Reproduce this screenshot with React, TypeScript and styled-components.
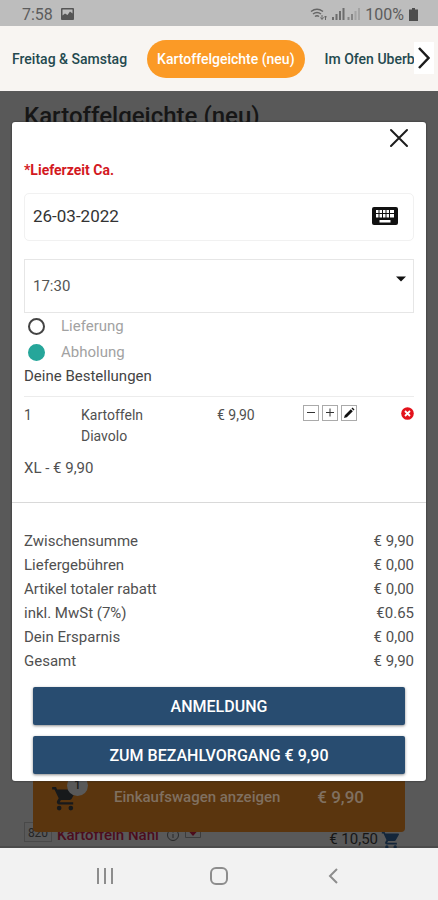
import React, { useState } from "react";
import styled, { createGlobalStyle } from "styled-components";

const GlobalStyle = createGlobalStyle`
  * { box-sizing: border-box; }
  body { margin: 0; background: #595959; }
  body, button, input, select { font-family: Roboto, "Liberation Sans", sans-serif; }
`;

const Screen = styled.div`
  display: flex;
  flex-direction: column;
  min-height: 100vh;
  color: #505050;
  font-size: 15px;
  overflow: hidden;
`;

const StatusBar = styled.div`
  display: flex;
  align-items: center;
  gap: 8px;
  height: 26px;
  padding: 2px 20px 0 22px;
  background: #bdbdbd;
  color: #5c5c5c;
  font-size: 16px;
`;

const StatusIcons = styled.div`
  display: flex;
  align-items: center;
  gap: 5px;
  margin-left: auto;
`;

const CategoryBar = styled.nav`
  position: relative;
  display: flex;
  align-items: center;
  height: 65px;
  padding-left: 12px;
  gap: 20px;
  background: #f8f5f2;
  overflow: hidden;
  white-space: nowrap;
`;

const Category = styled.a<{ $active?: boolean }>`
  flex: none;
  padding: ${(p) => (p.$active ? "0 10px" : "0")};
  border-radius: 19px;
  background: ${(p) => (p.$active ? "#fb9a26" : "transparent")};
  color: ${(p) => (p.$active ? "#fff" : "#24494f")};
  font-size: 14px;
  font-weight: 500;
  line-height: 38px;
  text-decoration: none;
`;

const NextButton = styled.button`
  position: absolute;
  top: 16px;
  right: 4px;
  display: flex;
  align-items: center;
  justify-content: center;
  width: 20px;
  height: 32px;
  padding: 0;
  border: 0;
  background: #fff;
`;

const Stage = styled.main`
  display: grid;
  flex: 1;
  overflow: hidden;
  background: #595959;
`;

const MenuPage = styled.div`
  position: relative;
  grid-area: 1 / 1;
  display: flex;
  flex-direction: column;
  justify-content: space-between;
  padding: 9px 24px 0;
  border-bottom: 2px solid #4b4b4b;
`;

const MenuTitle = styled.h1`
  margin: 0;
  color: #161616;
  font-size: 24px;
  font-weight: 500;
  line-height: 32px;
`;

const MenuRow = styled.div`
  display: flex;
  align-items: flex-end;
  height: 24px;
  padding-right: 13px;
  color: #161616;
  font-size: 15px;
  line-height: 18px;
`;

const MenuNumber = styled.span`
  width: 28px;
  height: 20px;
  margin: 0 5px 4px 0;
  border: 1px solid #494949;
  color: #252525;
  font-size: 12px;
  line-height: 20px;
  text-align: center;
`;

const MenuName = styled.span`
  height: 20px;
  margin-right: 8px;
  color: #4c0c1c;
  font-weight: 500;
`;

const MenuIcon = styled.span`
  display: flex;
  height: 20px;
  margin-right: 6px;
`;

const MenuPrice = styled.span`
  display: flex;
  align-items: center;
  gap: 3px;
  height: 14px;
  margin-left: auto;
`;

const CartBar = styled.div`
  position: absolute;
  right: 33px;
  bottom: 14px;
  left: 33px;
  display: flex;
  align-items: center;
  height: 70px;
  padding: 0 41px 0 18px;
  border-radius: 4px;
  background: #5a350e;
  color: #807060;
  font-size: 15px;
  font-weight: 500;
`;

const CartLabel = styled.span`
  margin: 0 auto 0 35px;
`;

const CartTotal = styled.span`
  font-size: 17px;
`;

const CartCount = styled.span`
  position: absolute;
  top: 13px;
  left: 34px;
  width: 21px;
  height: 21px;
  border-radius: 50%;
  background: #595959;
  color: #1c1c1c;
  font-size: 12px;
  line-height: 21px;
  text-align: center;
`;

const Dialog = styled.form`
  position: relative;
  z-index: 1;
  grid-area: 1 / 1;
  align-self: start;
  margin: 31px 12px 67px;
  padding: 38px 0 7px;
  border-radius: 3px;
  background: #fff;
  box-shadow: 0 0 2px #222;
`;

const CloseButton = styled.button`
  position: absolute;
  top: 5px;
  right: 16px;
  display: flex;
  padding: 0;
  border: 0;
  background: none;
`;

const DialogBody = styled.div`
  display: flex;
  flex-direction: column;
  padding: 0 12px;
`;

const DateLabel = styled.label`
  color: #d3191f;
  font-size: 14px;
  font-weight: 700;
  line-height: 21px;
`;

const DateField = styled.div`
  display: flex;
  align-items: center;
  height: 48px;
  margin: 12px 0 18px;
  padding: 0 15px 2px 8px;
  border: 1px solid #f1f1f1;
  border-radius: 5px;
`;

const DateInput = styled.input`
  flex: 1;
  min-width: 0;
  padding: 0;
  border: 0;
  outline: 0;
  background: none;
  color: #333;
  font-size: 17px;
`;

const TimeField = styled.div`
  position: relative;
  display: flex;
  height: 54px;
`;

const TimeSelect = styled.select`
  flex: 1;
  padding: 0 8px;
  border: 1px solid #e6e6e6;
  border-radius: 0;
  appearance: none;
  background: none;
  color: #555;
  font-size: 15px;
`;

const Caret = styled.svg`
  position: absolute;
  top: 17px;
  right: 8px;
  pointer-events: none;
`;

const Methods = styled.fieldset`
  margin: 0;
  padding: 0 0 0 4px;
  border: 0;
`;

const Method = styled.label`
  display: flex;
  align-items: center;
  gap: 16px;
  height: 26px;
  color: #a2a2a2;
  font-size: 15px;
`;

const Radio = styled.input`
  width: 17px;
  height: 17px;
  margin: 0;
  border: 2px solid #444;
  border-radius: 50%;
  appearance: none;
  background: #fff;

  &:checked {
    border-color: #26a69a;
    background: #26a69a;
  }
`;

const OrdersTitle = styled.h2`
  margin: 0;
  padding: 1px 0 9px;
  border-bottom: 1px solid #ececec;
  color: #444;
  font-size: 15px;
  font-weight: 400;
  line-height: 21px;
`;

const OrderTable = styled.table`
  width: 100%;
  margin-top: 8px;
  border-collapse: collapse;
  table-layout: fixed;
`;

const OrderCell = styled.td<{ $width?: string; $right?: boolean }>`
  width: ${(p) => p.$width ?? "auto"};
  padding: 0;
  font-size: 14px;
  line-height: 21px;
  text-align: ${(p) => (p.$right ? "right" : "left")};
  vertical-align: top;
`;

const VariantCell = styled.td`
  padding: 11px 0 23px;
  font-size: 15px;
  line-height: 21px;
`;

const Tools = styled.div`
  display: flex;
  gap: 3px;
`;

const ToolButton = styled.button`
  display: flex;
  align-items: center;
  justify-content: center;
  width: 16px;
  height: 16px;
  padding: 0;
  border: 1px solid #aaa;
  background: #fff;
`;

const RemoveButton = styled.button`
  padding: 0;
  border: 0;
  background: none;
  line-height: 0;
`;

const Totals = styled.section`
  padding: 26px 12px 0;
  border-top: 1px solid #d9d9d9;
`;

const TotalsTable = styled.table`
  width: 100%;
  border-collapse: collapse;
`;

const TotalName = styled.th`
  padding: 0;
  font-size: 15px;
  font-weight: 400;
  line-height: 24px;
  text-align: left;
`;

const TotalValue = styled.td`
  padding: 0;
  font-size: 15px;
  line-height: 24px;
  text-align: right;
`;

const Actions = styled.div`
  display: flex;
  flex-direction: column;
  gap: 11px;
  padding: 14px 21px 0;
`;

const ActionButton = styled.button`
  height: 38px;
  border: 0;
  border-radius: 2px;
  background: #284c70;
  box-shadow: 0 1px 3px #8b8b8b;
  color: #fff;
  font-size: 16px;
  font-weight: 500;
`;

const SystemNav = styled.footer`
  display: flex;
  align-items: center;
  height: 52px;
  padding: 4px 48px 0;
  background: #f2f2f2;
`;

const NavButton = styled.button`
  display: flex;
  flex: 1;
  justify-content: center;
  padding: 0;
  border: 0;
  background: none;
`;

const categories = ["Freitag & Samstag", "Kartoffelgeichte (neu)", "Im Ofen Uberb"];

const totals = [
  ["Zwischensumme", "€ 9,90"],
  ["Liefergebühren", "€ 0,00"],
  ["Artikel totaler rabatt", "€ 0,00"],
  ["inkl. MwSt (7%)", "€0.65"],
  ["Dein Ersparnis", "€ 0,00"],
  ["Gesamt", "€ 9,90"],
];

function CartIcon({ size, color }: { size: number; color: string }) {
  return (
    <svg width={size} height={size} viewBox="0 0 24 24" fill={color} aria-hidden="true">
      <path d="M7 19.500a2 2 0 1 0 0 4 2 2 0 0 0 0-4zM17 19.500a2 2 0 1 0 0 4 2 2 0 0 0 0-4zM1 3.500v2h2l3.600 7.600-1.400 2.400C4.500 16.900 5.500 18.500 7 18.500h12v-2H7.400l1.100-2h7.500c.700 0 1.400-.400 1.700-1L21.700 6.200 21 5.500H5.200L4.300 3.500z" />
    </svg>
  );
}

function Status() {
  return (
    <StatusBar>
      <span>7:58</span>
      <svg width="13" height="12" viewBox="0 0 13 12" aria-hidden="true">
        <rect width="13" height="12" rx="1" fill="#555" />
        <path d="M1.500 1.500h10v4L9 3.500 6.500 7 4 5.500l-2.500 2z" fill="#bdbdbd" />
      </svg>
      <StatusIcons>
        <svg width="17" height="15" viewBox="0 0 17 15" fill="none" stroke="#666" strokeWidth="1.500" aria-hidden="true">
          <path d="M1 4.500Q7 0 13 4.500M3 7q4-3 8 0M5 9.500q2-1.500 4 0" />
          <path d="M12 8v4M10.500 10.500 12 12.500l1.500-2M15.500 13V9M14 10.500 15.500 9l1.500 1.500" strokeWidth="1" />
        </svg>
        <svg width="28" height="12" viewBox="0 0 28 12" aria-hidden="true">
          <path d="M0 9h2v3H0zM3.500 6h2v6h-2zM7 3h2v9H7zM10.500 0h2v12h-2z" fill="#6d6d6d" />
          <path d="M15.500 9h2v3h-2zM19 6h2v6h-2z" fill="#858585" />
          <path d="M22.500 3h2v9h-2zM26 0h2v12h-2z" fill="#a4a4a4" />
        </svg>
        <span>100%</span>
        <svg width="9" height="13" viewBox="0 0 9 13" aria-hidden="true">
          <path d="M3 0h3v1.500h3V13H0V1.500h3z" fill="#4d4d4d" />
        </svg>
      </StatusIcons>
    </StatusBar>
  );
}

export default function App() {
  const [method, setMethod] = useState("Abholung");
  return (
    <>
      <GlobalStyle />
      <Screen>
        <Status />
        <CategoryBar>
          {categories.map((name, i) => (
            <Category key={name} href="#" $active={i === 1}>
              {name}
            </Category>
          ))}
          <NextButton type="button" aria-label="Weiter">
            <svg width="12" height="22" viewBox="0 0 12 22" fill="none" stroke="#1c1c1c" strokeWidth="2.500" aria-hidden="true">
              <path d="M1 1l9.500 10L1 21" />
            </svg>
          </NextButton>
        </CategoryBar>
        <Stage>
          <MenuPage>
            <MenuTitle>Kartoffelgeichte (neu)</MenuTitle>
            <MenuRow>
              <MenuNumber>820</MenuNumber>
              <MenuName>Kartoffeln Nahl</MenuName>
              <MenuIcon>
                <svg width="12" height="16" viewBox="0 0 12 16" fill="none" stroke="#292929" aria-hidden="true">
                  <circle cx="6" cy="9" r="5.500" />
                  <path d="M6 8v4M6 5.500v1" />
                </svg>
              </MenuIcon>
              <MenuIcon>
                <svg width="16" height="14" viewBox="0 0 16 14" aria-hidden="true">
                  <path d="M.5 0v11.500h15V0" fill="none" stroke="#3c3c3c" />
                  <path d="M3.500 5h9L8 10z" fill="#4c0c1c" />
                </svg>
              </MenuIcon>
              <MenuPrice>
                € 10,50
                <CartIcon size={20} color="#14263a" />
              </MenuPrice>
            </MenuRow>
            <CartBar>
              <CartIcon size={28} color="#17191b" />
              <CartCount>1</CartCount>
              <CartLabel>Einkaufswagen anzeigen</CartLabel>
              <CartTotal>€ 9,90</CartTotal>
            </CartBar>
          </MenuPage>
          <Dialog onSubmit={(e) => e.preventDefault()}>
            <CloseButton type="button" aria-label="Schließen">
              <svg width="22" height="22" viewBox="0 0 22 22" stroke="#1c1c1c" strokeWidth="2" strokeLinecap="round" aria-hidden="true">
                <path d="M3 3l16 16M19 3L3 19" />
              </svg>
            </CloseButton>
            <DialogBody>
              <DateLabel htmlFor="date">*Lieferzeit Ca.</DateLabel>
              <DateField>
                <DateInput id="date" defaultValue="26-03-2022" />
                <svg width="26" height="18" viewBox="0 0 26 18" aria-hidden="true">
                  <rect width="26" height="18" rx="2" fill="#111" />
                  <path d="M4 3h2.500v3H4zM7.500 3H10v3H7.500zM11 3h2.500v3H11zM14.500 3H17v3h-2.500zM18 3h4v3h-4zM4 7h2.500v3.500H4zM7.500 7H10v3.500H7.500zM11 7h2.500v3.500H11zM14.500 7H17v3.500h-2.500zM18 7h4v3.500h-4zM7.500 13h11v2.500h-11z" fill="#fff" />
                </svg>
              </DateField>
              <TimeField>
                <TimeSelect aria-label="Uhrzeit" defaultValue="17:30">
                  <option>17:30</option>
                  <option>18:00</option>
                </TimeSelect>
                <Caret width="10" height="6" viewBox="0 0 10 6" aria-hidden="true">
                  <path d="M0 .5h10L5 5.500z" fill="#111" />
                </Caret>
              </TimeField>
              <Methods>
                {["Lieferung", "Abholung"].map((name) => (
                  <Method key={name}>
                    <Radio type="radio" name="method" checked={method === name} onChange={() => setMethod(name)} />
                    {name}
                  </Method>
                ))}
              </Methods>
              <OrdersTitle>Deine Bestellungen</OrdersTitle>
              <OrderTable>
                <tbody>
                  <tr>
                    <OrderCell $width="57px">1</OrderCell>
                    <OrderCell>
                      Kartoffeln
                      <br />
                      Diavolo
                    </OrderCell>
                    <OrderCell $width="86px">€ 9,90</OrderCell>
                    <OrderCell $width="78px">
                      <Tools>
                        <ToolButton type="button" aria-label="Weniger">
                          <svg width="12" height="12" viewBox="0 0 12 12" stroke="#333" aria-hidden="true">
                            <path d="M2 5.500h8" />
                          </svg>
                        </ToolButton>
                        <ToolButton type="button" aria-label="Mehr">
                          <svg width="12" height="12" viewBox="0 0 12 12" stroke="#333" aria-hidden="true">
                            <path d="M2 5.500h8M6 1.500v8" />
                          </svg>
                        </ToolButton>
                        <ToolButton type="button" aria-label="Bearbeiten">
                          <svg width="12" height="12" viewBox="0 0 12 12" fill="#111" aria-hidden="true">
                            <path d="M1 11l.8-2.800 6-6 2 2-6 6zM8.500 1.500l1-1 2 2-1 1z" />
                          </svg>
                        </ToolButton>
                      </Tools>
                    </OrderCell>
                    <OrderCell $width="33px" $right>
                      <RemoveButton type="button" aria-label="Entfernen">
                        <svg width="13" height="13" viewBox="0 0 13 13" aria-hidden="true">
                          <circle cx="6.500" cy="6.500" r="6.300" fill="#e3121b" />
                          <path d="M4 4l5 5M9 4L4 9" stroke="#fff" strokeWidth="1.800" />
                        </svg>
                      </RemoveButton>
                    </OrderCell>
                  </tr>
                  <tr>
                    <VariantCell colSpan={5}>XL - € 9,90</VariantCell>
                  </tr>
                </tbody>
              </OrderTable>
            </DialogBody>
            <Totals>
              <TotalsTable>
                <tbody>
                  {totals.map(([name, value]) => (
                    <tr key={name}>
                      <TotalName scope="row">{name}</TotalName>
                      <TotalValue>{value}</TotalValue>
                    </tr>
                  ))}
                </tbody>
              </TotalsTable>
            </Totals>
            <Actions>
              <ActionButton type="button">ANMELDUNG</ActionButton>
              <ActionButton type="submit">ZUM BEZAHLVORGANG € 9,90</ActionButton>
            </Actions>
          </Dialog>
        </Stage>
        <SystemNav>
          <NavButton type="button" aria-label="Letzte Apps">
            <svg width="18" height="18" viewBox="0 0 18 18" stroke="#8d8d8d" strokeWidth="2" aria-hidden="true">
              <path d="M2 1v16M9 1v16M16 1v16" />
            </svg>
          </NavButton>
          <NavButton type="button" aria-label="Startseite">
            <svg width="20" height="20" viewBox="0 0 20 20" fill="none" stroke="#8d8d8d" strokeWidth="2" aria-hidden="true">
              <rect x="2" y="2" width="16" height="16" rx="5" />
            </svg>
          </NavButton>
          <NavButton type="button" aria-label="Zurück">
            <svg width="10" height="18" viewBox="0 0 10 18" fill="none" stroke="#8d8d8d" strokeWidth="2" aria-hidden="true">
              <path d="M9 2L2 9l7 7" />
            </svg>
          </NavButton>
        </SystemNav>
      </Screen>
    </>
  );
}
